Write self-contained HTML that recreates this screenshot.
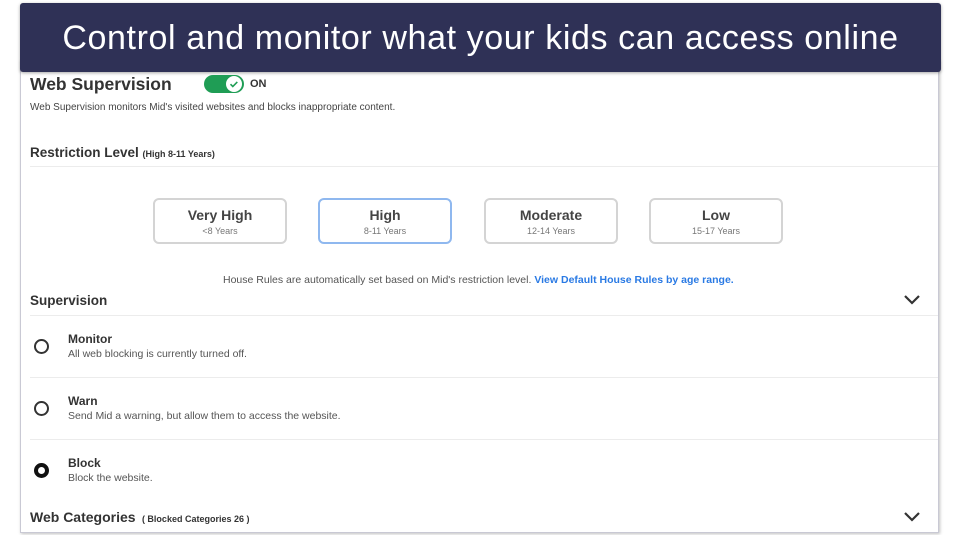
<!DOCTYPE html>
<html><head><style>
*{margin:0;padding:0;box-sizing:border-box}
body{width:960px;height:535px;background:#fff;position:relative;overflow:hidden;font-family:"Liberation Sans",sans-serif;color:#333}
.panel{position:absolute;left:20px;top:60px;width:919px;height:473px;border:1px solid #c9c9d4;border-top:none;box-shadow:1px 1px 3px rgba(0,0,0,.25);background:#fff}
.banner{position:absolute;left:20px;top:3px;width:921px;height:69px;background:#2f3156;border-radius:3px;box-shadow:0 1px 3px rgba(0,0,0,.35);color:#fff;font-size:34px;text-align:center;line-height:70px;letter-spacing:0.6px;font-family:"Liberation Sans",sans-serif}
.abs{position:absolute}
.hr{position:absolute;left:30px;width:908px;height:1px;background:#ececec}
.btn{position:absolute;top:198px;width:134px;height:46px;border:2px solid #d4d4d4;border-radius:6px;text-align:center}
.btn b{display:block;font-size:14px;color:#444;margin-top:7px}
.btn span{display:block;font-size:9px;color:#777;margin-top:3px}
.radio{position:absolute;left:34px;width:15px;height:15px;border:2px solid #333;border-radius:50%}
.t{position:absolute;left:68px;font-size:12px;font-weight:bold;color:#333}
.d{position:absolute;left:68px;font-size:10.5px;color:#555}
.chev{position:absolute;left:902px;width:20px;height:12px}
.h{font-weight:bold;color:#333}
</style></head><body>
<div class="panel"></div>
<div class="banner">Control and monitor what your kids can access online</div>
<div class="abs h" style="left:30px;top:74px;font-size:17.5px">Web Supervision</div>
<div class="abs" style="left:204px;top:75px;width:40px;height:18px;border-radius:9px;background:#1f9d55"></div>
<div class="abs" style="left:226px;top:76px;width:16px;height:16px;border-radius:50%;background:#fff"></div>
<svg class="abs" style="left:228px;top:78px" width="12" height="12" viewBox="0 0 12 12"><path d="M2.5 6.2l2.3 2.3 4.5-4.6" fill="none" stroke="#1f9d55" stroke-width="1.6"/></svg>
<div class="abs" style="left:250px;top:78px;font-size:11px;font-weight:bold;color:#333">ON</div>
<div class="abs" style="left:30px;top:102px;font-size:10px;color:#444">Web Supervision monitors Mid's visited websites and blocks inappropriate content.</div>
<div class="abs h" style="left:30px;top:145px;font-size:13.5px">Restriction Level <span style="font-size:9px">(High 8-11 Years)</span></div>
<div class="hr" style="top:166px"></div>
<div class="btn" style="left:153px"><b>Very High</b><span>&lt;8 Years</span></div>
<div class="btn" style="left:318px;border-color:#8fb8ef"><b>High</b><span>8-11 Years</span></div>
<div class="btn" style="left:484px"><b>Moderate</b><span>12-14 Years</span></div>
<div class="btn" style="left:649px"><b>Low</b><span>15-17 Years</span></div>
<div class="abs" style="left:223px;top:274px;font-size:10.5px;color:#555">House Rules are automatically set based on Mid's restriction level. <b style="color:#2a7ae4">View Default House Rules by age range.</b></div>
<div class="abs h" style="left:30px;top:293px;font-size:13.5px">Supervision</div>
<svg class="chev" style="top:294px" viewBox="0 0 20 12"><path d="M3 2l7 7 7-7" fill="none" stroke="#333" stroke-width="2.2"/></svg>
<div class="hr" style="top:315px"></div>
<div class="radio" style="top:339px"></div>
<div class="t" style="top:332px">Monitor</div>
<div class="d" style="top:348px">All web blocking is currently turned off.</div>
<div class="hr" style="top:377px"></div>
<div class="radio" style="top:401px"></div>
<div class="t" style="top:394px">Warn</div>
<div class="d" style="top:410px">Send Mid a warning, but allow them to access the website.</div>
<div class="hr" style="top:439px"></div>
<div class="radio" style="top:463px;border:4.5px solid #111"></div>
<div class="t" style="top:456px">Block</div>
<div class="d" style="top:472px">Block the website.</div>
<div class="abs h" style="left:30px;top:509px;font-size:14px">Web Categories <span style="font-size:9px">&nbsp;( Blocked Categories 26 )</span></div>
<svg class="chev" style="top:511px" viewBox="0 0 20 12"><path d="M3 2l7 7 7-7" fill="none" stroke="#333" stroke-width="2.2"/></svg>
</body></html>
